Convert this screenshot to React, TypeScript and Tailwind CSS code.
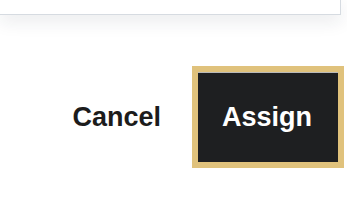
const App = () => {
  return (
    <div className="h-[201px] w-full overflow-hidden bg-white font-['Liberation_Sans',Arial,sans-serif]">
      <div className="h-[15px] w-[341px] border-b border-r border-[#d6dbe1] bg-white shadow-[0_6px_18px_rgba(30,40,60,0.10)]" />
      <div className="mt-[51px] flex items-center justify-end pr-[3px]">
        <button className="mr-[31px] text-[27px] font-bold leading-none text-[#1c1c1c]">
          Cancel
        </button>
        <button className="flex h-[102px] w-[152px] items-center justify-center border-[6px] border-[#e0c27c] bg-[#1e1f21] pr-[2px] text-[27px] font-bold leading-none text-white shadow-[inset_0_1px_0_#b9b9b9]">
          Assign
        </button>
      </div>
    </div>
  );
};

export default App;
